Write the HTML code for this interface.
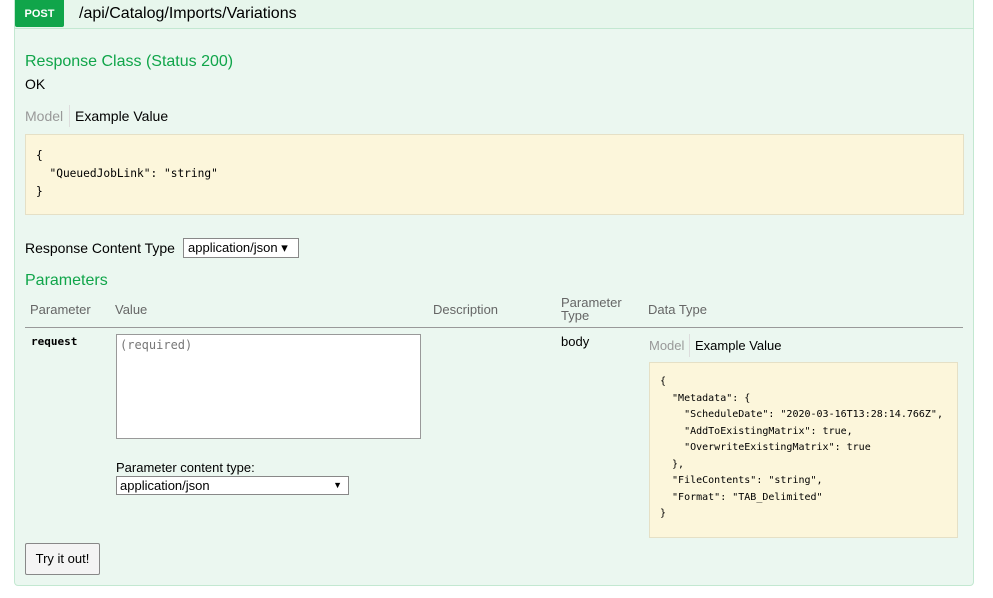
<!DOCTYPE html>
<html><head><style>
body{margin:0;width:993px;height:598px;background:#fff;font-family:"Liberation Sans",Arial,sans-serif;position:relative;overflow:hidden}
.a{position:absolute}
.box{left:14px;top:-4px;width:958px;height:588px;background:#ebf7f0;border:1px solid #c3e8d1;border-radius:0 0 4px 4px}
.hdr{left:15px;top:0;width:958px;height:28px;border-bottom:1px solid #c3e8d1;background:#e7f6ec}
.post{left:15px;top:0;width:49px;height:27px;background:#10a54a;color:#fff;font-size:11px;font-weight:bold;text-align:center;line-height:29px;border-radius:0 0 2px 2px}
.g{color:#10a54a;font-size:16px}
.t{font-size:14px;color:#000}
.mono{font-family:"DejaVu Sans Mono","Liberation Mono",monospace;font-size:10px;color:#000;white-space:pre;line-height:16.5px}
.sig{background:#fcf6db;border:1px solid #e5e0c6}
.gray{color:#999;font-size:14px}
.th{color:#666;font-size:13px}
</style></head><body>
<div class="a box"></div>
<div class="a hdr"></div>
<div class="a post">POST</div>
<div class="a" style="left:79px;top:5px;font-size:16px;color:#000">/api/Catalog/Imports/Variations</div>
<div class="a g" style="left:25px;top:53px">Response Class (Status 200)</div>
<div class="a t" style="left:25px;top:76px">OK</div>
<div class="a gray" style="left:25px;top:108px">Model</div>
<div class="a" style="left:69px;top:105px;height:22px;border-left:1px solid #ddd"></div>
<div class="a t" style="left:75px;top:108px">Example Value</div>
<div class="a sig" style="left:25px;top:134px;width:937px;height:79px"></div>
<div class="a mono" style="left:36px;top:147px;font-size:11.2px;line-height:18px">{
  "QueuedJobLink": "string"
}</div>
<div class="a t" style="left:25px;top:240px">Response Content Type</div>
<div class="a" style="left:183px;top:238px;border:1px solid #888;background:#fff;font-size:13px;line-height:18px;padding-left:4px;box-sizing:border-box;width:116px;height:20px">application/json ▾</div>
<div class="a g" style="left:25px;top:272px">Parameters</div>
<div class="a th" style="left:30px;top:302px">Parameter</div>
<div class="a th" style="left:115px;top:302px">Value</div>
<div class="a th" style="left:433px;top:302px">Description</div>
<div class="a th" style="left:561px;top:296px;line-height:13px">Parameter<br>Type</div>
<div class="a th" style="left:648px;top:302px">Data Type</div>
<div class="a" style="left:25px;top:327px;width:938px;border-top:1px solid #999"></div>
<div class="a" style="left:31px;top:335px;font-family:'DejaVu Sans Mono',monospace;font-size:11px;font-weight:bold">request</div>
<div class="a" style="left:116px;top:334px;width:305px;height:105px;border:1px solid #999;background:#fff;box-sizing:border-box"></div>
<div class="a" style="left:120px;top:338px;font-family:'DejaVu Sans Mono',monospace;font-size:12px;color:#777">(required)</div>
<div class="a" style="left:116px;top:460px;font-size:13px">Parameter content type:</div>
<div class="a" style="left:116px;top:476px;width:233px;height:19px;border:1px solid #888;background:#fff;box-sizing:border-box;font-size:13px;line-height:17px;padding-left:3px">application/json<span style="position:absolute;right:6px;font-size:9px">▼</span></div>
<div class="a" style="left:561px;top:334px;font-size:13px">body</div>
<div class="a gray" style="left:649px;top:338px;font-size:13px">Model</div>
<div class="a" style="left:689px;top:334px;height:23px;border-left:1px solid #ddd"></div>
<div class="a" style="left:695px;top:338px;font-size:13px">Example Value</div>
<div class="a sig" style="left:649px;top:362px;width:307px;height:174px"></div>
<div class="a mono" style="left:660px;top:374px">{
  "Metadata": {
    "ScheduleDate": "2020-03-16T13:28:14.766Z",
    "AddToExistingMatrix": true,
    "OverwriteExistingMatrix": true
  },
  "FileContents": "string",
  "Format": "TAB_Delimited"
}</div>
<div class="a" style="left:25px;top:543px;width:75px;height:32px;border:1px solid #888;background:#f4f4f4;box-sizing:border-box;font-size:13px;text-align:center;line-height:30px;border-radius:2px">Try it out!</div>
</body></html>
